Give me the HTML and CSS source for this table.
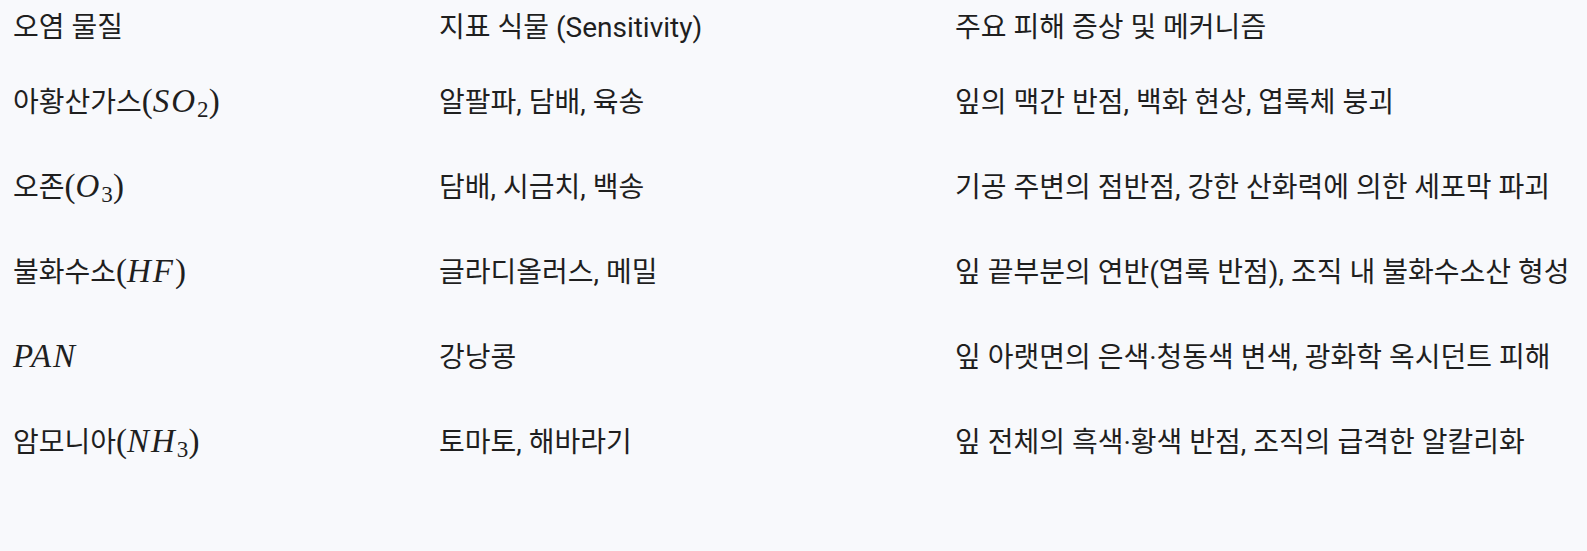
FILE: index.html
```html
<!DOCTYPE html>
<html lang="ko">
<head>
<meta charset="utf-8">
<link rel="stylesheet" href="styles.css">
</head>
<body>
<div class="table">
  <div class="row head">
    <div class="cell">오염 물질</div>
    <div class="cell">지표 식물 (Sensitivity)</div>
    <div class="cell">주요 피해 증상 및 메커니즘</div>
  </div>
  <div class="row">
    <div class="cell">아황산가스<span class="m">(<i>SO</i><sub>2</sub>)</span></div>
    <div class="cell">알팔파, 담배, 육송</div>
    <div class="cell">잎의 맥간 반점, 백화 현상, 엽록체 붕괴</div>
  </div>
  <div class="row">
    <div class="cell">오존<span class="m">(<i>O</i><sub>3</sub>)</span></div>
    <div class="cell">담배, 시금치, 백송</div>
    <div class="cell">기공 주변의 점반점, 강한 산화력에 의한 세포막 파괴</div>
  </div>
  <div class="row">
    <div class="cell">불화수소<span class="m">(<i>HF</i>)</span></div>
    <div class="cell">글라디올러스, 메밀</div>
    <div class="cell">잎 끝부분의 연반(엽록 반점), 조직 내 불화수소산 형성</div>
  </div>
  <div class="row">
    <div class="cell"><span class="m"><i>PAN</i></span></div>
    <div class="cell">강낭콩</div>
    <div class="cell">잎 아랫면의 은색·청동색 변색, 광화학 옥시던트 피해</div>
  </div>
  <div class="row">
    <div class="cell">암모니아<span class="m">(<i>NH</i><sub>3</sub>)</span></div>
    <div class="cell">토마토, 해바라기</div>
    <div class="cell">잎 전체의 흑색·황색 반점, 조직의 급격한 알칼리화</div>
  </div>
</div>
</body>
</html>
```

FILE: styles.css
```css
html, body {
  margin: 0;
  padding: 0;
  background: #f8f9fc;
}
body {
  font-family: Roboto, "Noto Sans CJK KR", sans-serif;
  font-size: 28px;
  color: #1f1f1f;
  width: 1587px;
  height: 551px;
  overflow: hidden;
}
.table {
  padding-left: 13px;
}
.row {
  display: grid;
  grid-template-columns: 426px 516px 1fr;
  height: 85px;
  align-items: center;
  line-height: 40px;
  white-space: nowrap;
}
.row.head {
  height: 60px;
  align-items: start;
  padding-top: 8px;
  box-sizing: border-box;
}
.m {
  font-family: "Liberation Serif", serif;
  font-size: 33px;
  line-height: 0;
}
.m i {
  font-style: italic;
  letter-spacing: 0.06em;
}
.m sub {
  font-size: 0.7em;
  font-style: normal;
  vertical-align: -0.2em;
  line-height: 0;
}
```
